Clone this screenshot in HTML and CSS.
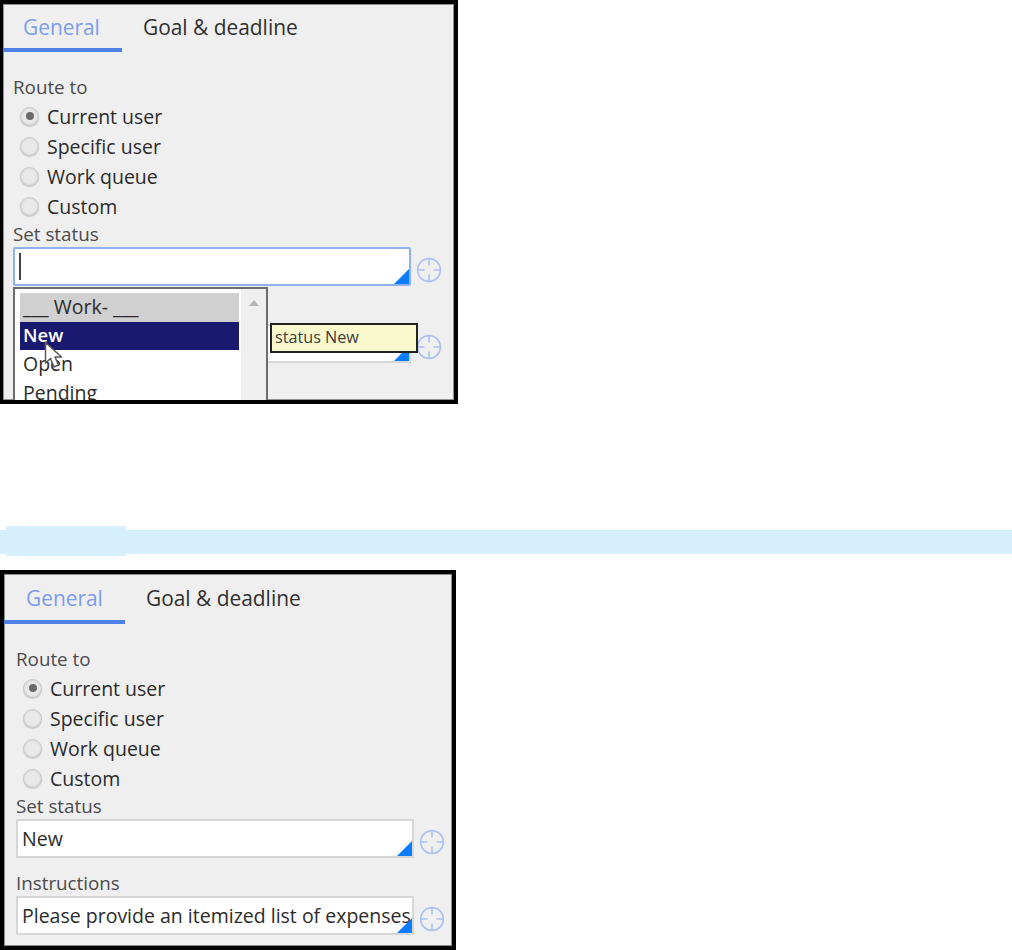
FILE: index.html
```html
<!DOCTYPE html>
<html lang="en">
<head>
<meta charset="utf-8">
<title>Route to</title>
<link rel="stylesheet" href="styles.css">
</head>
<body>
<svg class="defs" width="0" height="0" aria-hidden="true">
  <symbol id="target" viewBox="0 0 26 26">
    <circle cx="13" cy="13" r="11.400" fill="none" stroke="currentColor" stroke-width="1.600"/>
    <path d="M13 1.500V8.500M13 17.500V24.500M1.500 13H8.500M17.500 13H24.500" fill="none" stroke="currentColor" stroke-width="1.600"/>
  </symbol>
</svg>

<section class="panel panel-top">
  <nav class="tabs tabs-top">
    <span class="tab active">General</span>
    <span class="tab">Goal &amp; deadline</span>
  </nav>
  <div class="form">
    <div class="label route-label">Route to</div>
    <ul class="radios">
      <li><span class="radio checked"></span>Current user</li>
      <li><span class="radio"></span>Specific user</li>
      <li><span class="radio"></span>Work queue</li>
      <li><span class="radio"></span>Custom</li>
    </ul>
    <div class="label status-label">Set status</div>
    <div class="field">
      <div class="input focused"><span class="caret"></span></div>
      <svg class="target"><use href="#target"/></svg>
    </div>
    <div class="label instr-label">Instructions</div>
    <div class="field">
      <div class="input"></div>
      <svg class="target"><use href="#target"/></svg>
    </div>
  </div>
  <div class="menu">
    <ul class="menu-list">
      <li class="group">___ Work- ___</li>
      <li class="selected">New</li>
      <li>Open</li>
      <li>Pending</li>
    </ul>
    <div class="scrollbar"><span class="arrow"></span></div>
  </div>
  <div class="tooltip">status New</div>
  <svg class="pointer" width="22" height="32" viewBox="0 0 22 32">
    <path d="M1.500 1.500V22L6.500 17.500l3.500 8.500 4.500-2-3.500-8h6.500z" fill="#fff" stroke="#5a5a5a" stroke-width="1.500" stroke-linejoin="round"/>
  </svg>
</section>

<div class="band"></div>

<section class="panel panel-bottom">
  <nav class="tabs tabs-bottom">
    <span class="tab active">General</span>
    <span class="tab">Goal &amp; deadline</span>
  </nav>
  <div class="form">
    <div class="label route-label">Route to</div>
    <ul class="radios">
      <li><span class="radio checked"></span>Current user</li>
      <li><span class="radio"></span>Specific user</li>
      <li><span class="radio"></span>Work queue</li>
      <li><span class="radio"></span>Custom</li>
    </ul>
    <div class="label status-label">Set status</div>
    <div class="field">
      <div class="input plain">New</div>
      <svg class="target"><use href="#target"/></svg>
    </div>
    <div class="label instr-label">Instructions</div>
    <div class="field">
      <div class="input plain">Please provide an itemized list of expenses</div>
      <svg class="target"><use href="#target"/></svg>
    </div>
  </div>
</section>
</body>
</html>
```

FILE: styles.css
```css
* { box-sizing: border-box; }
html, body { margin: 0; padding: 0; background: #fff; }
body {
  width: 1012px;
  height: 950px;
  overflow: hidden;
  font-family: "Open Sans", "Noto Sans", sans-serif;
  font-size: 19.500px;
  color: #2b2b2b;
}
.defs { position: absolute; }
ul { list-style: none; margin: 0; padding: 0; }

.panel {
  position: relative;
  overflow: hidden;
  background: #efefef;
  border-style: solid;
  border-color: #000;
  box-shadow: inset 0 0 0 1px #8f8f8f;
}
.panel-top {
  width: 458px;
  height: 404px;
  border-width: 4px 4px 4px 3px;
}
.panel-bottom {
  width: 456px;
  height: 380px;
  border-width: 4px 4px 4px 4px;
}

.tabs { display: flex; height: 48px; }
.tab {
  width: 119px;
  height: 48px;
  padding: 9px 0 0 20px;
  font-size: 20.900px;
  line-height: 28px;
  white-space: nowrap;
  color: #2f2f2f;
}
.tab.active {
  color: #7d9cec;
  border-bottom: 4px solid #4f82e8;
}
.tab + .tab { padding-left: 21px; width: auto; }
.tabs-bottom .tab { padding-top: 10px; }
.tabs-bottom .tab.active { width: 121px; height: 50px; padding-left: 22px; }
.tabs-bottom { height: 50px; }

.form { padding: 0 0 0 10px; }
.panel-bottom .form { padding-left: 12px; }
.label { height: 26px; line-height: 26px; color: #4b4b4b; font-size: 18.800px; }
.route-label { margin-top: 22px; }

.radios { margin-top: 1px; }
.radios li {
  display: flex;
  align-items: center;
  height: 30px;
  padding-left: 7px;
  white-space: nowrap;
}
.radio {
  flex: none;
  position: relative;
  width: 19px;
  height: 19px;
  margin-right: 8px;
  border-radius: 50%;
  background: #e9e9e9;
  border: 1px solid #cacaca;
  box-shadow: inset 0 0 2px #c4c4c4, 0 1px 1px #c8c8c8;
}
.radio.checked::after {
  content: "";
  position: absolute;
  left: 4.500px;
  top: 4.500px;
  width: 8px;
  height: 8px;
  border-radius: 50%;
  background: #6b6b6b;
}
.status-label { height: 26px; }
.instr-label { margin-top: 12px; height: 26px; }

.field { display: flex; align-items: center; gap: 5px; }
.input {
  position: relative;
  width: 398px;
  height: 39px;
  padding-left: 4px;
  line-height: 36px;
  white-space: nowrap;
  overflow: hidden;
  background: #fff;
  border: 2px solid #d6d6d6;
}
.input::after {
  content: "";
  position: absolute;
  right: 0;
  bottom: 0;
  border-style: solid;
  border-width: 0 0 15px 15px;
  border-color: transparent transparent #0a7cff transparent;
}
.input.focused { border-color: #8fb0f2; border-radius: 2px; }
.caret {
  display: block;
  width: 2px;
  height: 27px;
  margin-top: 4px;
  background: #444;
}
.target {
  flex: none;
  width: 26px;
  height: 26px;
  color: #a9c1f3;
  margin-top: 6px;
}

.menu {
  position: absolute;
  left: 10px;
  top: 283px;
  width: 255px;
  height: 130px;
  display: flex;
  background: #fff;
  border: 2px solid #6d6d6d;
  padding: 4px 0 0 5px;
}
.menu-list { width: 219px; flex: none; }
.menu-list li {
  height: 28.500px;
  line-height: 27px;
  padding-left: 3px;
  white-space: nowrap;
}
.menu-list .group { background: #d0d0d0; }
.menu-list .selected { background: #191970; color: #fff; font-weight: 600; font-size: 18.500px; line-height: 26px; }
.scrollbar {
  flex: 1;
  margin-left: 2px;
  margin-top: -4px;
  background: #efefef;
  position: relative;
}
.arrow {
  position: absolute;
  left: 8px;
  top: 11px;
  border-style: solid;
  border-width: 0 5px 6px 5px;
  border-color: transparent transparent #b4b4b4 transparent;
}
.tooltip {
  position: absolute;
  left: 267px;
  top: 319px;
  width: 148px;
  height: 30px;
  padding-left: 3px;
  font-size: 16.200px;
  line-height: 24px;
  color: #3c3c3c;
  background: #f9f9cd;
  border: 2px solid #222;
}
.pointer {
  position: absolute;
  left: 41px;
  top: 337px;
}

.band {
  position: relative;
  height: 24px;
  margin-top: 126px;
  margin-bottom: 16px;
  background: #d6effc;
}
.band::before {
  content: "";
  position: absolute;
  left: 6px;
  top: -4px;
  width: 120px;
  height: 30px;
  background: #d6effc;
}
```
